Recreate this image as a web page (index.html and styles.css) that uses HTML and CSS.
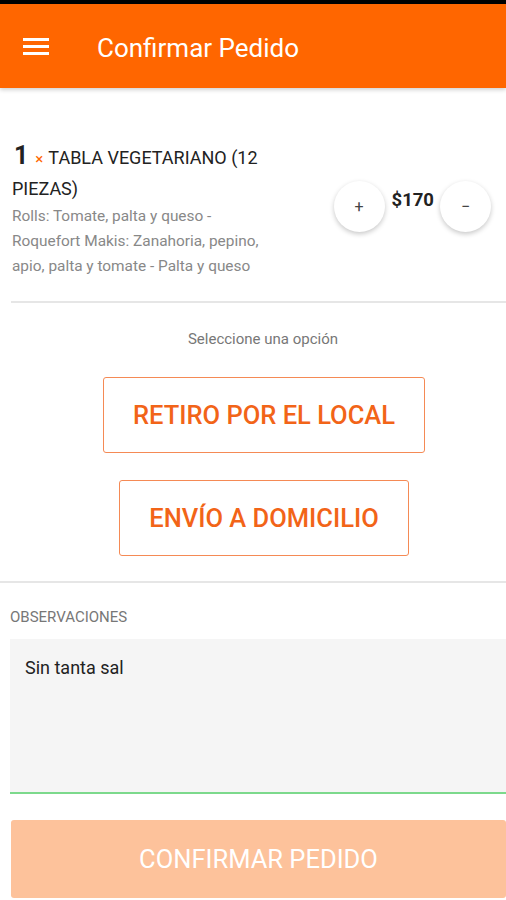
FILE: index.html
```html
<!DOCTYPE html>
<html lang="es">
<head>
  <meta charset="UTF-8" />
  <meta name="viewport" content="width=device-width, initial-scale=1.0"/>
  <title>Confirmar Pedido</title>
  <link rel="stylesheet" href="styles.css">
</head>
<body>
  <div class="statusbar"></div>
  <header class="topbar">
    <button class="menu" aria-label="Menú">
      <svg width="26" height="17" viewBox="0 0 26 17">
        <rect x="0" y="0" width="26" height="3" fill="#fff"/>
        <rect x="0" y="7" width="26" height="3" fill="#fff"/>
        <rect x="0" y="14" width="26" height="3" fill="#fff"/>
      </svg>
    </button>
    <h1>Confirmar Pedido</h1>
  </header>

  <section class="item">
    <div class="item-info">
      <div class="item-title"><span class="qty">1</span><span class="times">×</span>TABLA VEGETARIANO (12 PIEZAS)</div>
      <div class="item-desc">Rolls: Tomate, palta y queso - Roquefort Makis: Zanahoria, pepino, apio, palta y tomate - Palta y queso</div>
    </div>
    <div class="item-ctrl">
      <button class="round">+</button>
      <span class="price">$170</span>
      <button class="round">−</button>
    </div>
  </section>

  <section class="options">
    <p class="hint">Seleccione una opción</p>
    <button class="opt">RETIRO POR EL LOCAL</button>
    <button class="opt">ENVÍO A DOMICILIO</button>
  </section>

  <section class="notes">
    <label for="obs">OBSERVACIONES</label>
    <textarea id="obs">Sin tanta sal</textarea>
  </section>

  <button class="confirm" disabled>CONFIRMAR PEDIDO</button>
</body>
</html>
```

FILE: styles.css
```css
body { margin: 0; font-family: Roboto, "Liberation Sans", sans-serif; background: #fff; color: #222; overflow: hidden; }
button { font-family: inherit; }
.statusbar { height: 4px; background: #000; }
.topbar { height: 84px; background: #ff6600; display: flex; align-items: center; box-shadow: 0 2px 4px rgba(0,0,0,0.18); position: relative; }
.menu { background: none; border: none; padding: 0; margin: 0 0 0 23px; width: 26px; height: 17px; display: flex; }
.topbar h1 { margin: 4px 0 0 48px; color: #fff; font-size: 26px; font-weight: 400; }

.item { display: flex; align-items: center; padding: 53px 15px 0 12px; }
.item-info { width: 256px; }
.item-title { font-size: 18px; line-height: 30px; color: #222; }
.qty { font-size: 25px; font-weight: 700; margin: 0 7px 0 2px; }
.times { color: #ff6600; font-size: 15px; margin-right: 5px; }
.item-desc { font-size: 15.4px; line-height: 25px; color: #888; }
.item-ctrl { margin-left: auto; display: flex; align-items: center; gap: 6px; margin-top: -8px; }
.round { width: 51px; height: 51px; border-radius: 50%; border: none; background: #fff; box-shadow: 0 2px 5px rgba(0,0,0,0.22); font-size: 16px; color: #444; }
.price { font-size: 18.5px; font-weight: 700; margin: 0 0 13px 1px; }

.options { border-top: 2px solid #e6e6e6; margin: 22px 0 0 11px; padding: 0 11px 25px 0; display: flex; flex-direction: column; align-items: center; }
.hint { margin: 27px 0 29px 20px; font-size: 15px; color: #777; }
.opt { background: #fff; border: 1.5px solid #f58a55; border-radius: 3px; color: #f26418; font-size: 25.5px; font-weight: 500; height: 76px; padding: 0 29px; margin-left: 22px; }
.opt + .opt { margin-top: 27px; }

.notes { border-top: 2px solid #e6e6e6; padding: 25px 0 0 10px; }
.notes label { display: block; font-size: 15px; color: #777; }
.notes textarea { display: block; width: 100%; box-sizing: border-box; height: 155px; margin-top: 13px; border: none; border-bottom: 2px solid #7cd98c; background: #f5f5f5; padding: 18px 15px; font-family: inherit; font-size: 18px; color: #222; resize: none; }

.confirm { display: block; margin: 26px 0 0 11px; width: 495px; height: 78px; border: none; border-radius: 3px; background: #fdc29b; color: #fff; font-size: 25.5px; }
```
